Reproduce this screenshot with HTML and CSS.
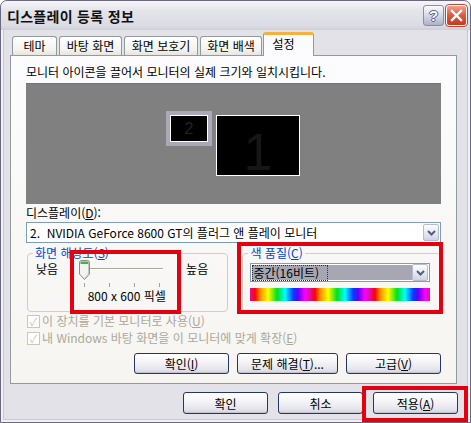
FILE: index.html
```html
<!DOCTYPE html>
<html lang="ko">
<head>
    <meta charset="UTF-8">
    <title>디스플레이 등록 정보</title>
    <link rel="stylesheet" href="styles.css">
</head>
<body>
    <div class="window">
        <div class="titlebar">
            <span class="title">디스플레이 등록 정보</span>
            <span class="tb-btn help">?</span>
            <span class="tb-btn close">
                <svg width="13" height="13" viewBox="0 0 13 13"><path d="M2 2 L11 11 M11 2 L2 11" stroke="#fff" stroke-width="2.4" stroke-linecap="square"/></svg>
            </span>
        </div>

        <div class="tabs">
            <div class="tab t1">테마</div>
            <div class="tab t2">바탕 화면</div>
            <div class="tab t3">화면 보호기</div>
            <div class="tab t4">화면 배색</div>
            <div class="tab active">설정</div>
        </div>

        <div class="panel">
            <div class="caption">모니터 아이콘을 끌어서 모니터의 실제 크기와 일치시킵니다.</div>
            <div class="monitors">
                <div class="monitor second"><span>2</span></div>
                <div class="monitor first"><span>1</span></div>
            </div>

            <div class="label">디스플레이(<u>D</u>):</div>
            <div class="combo">
                <span class="combo-text">2.&nbsp; NVIDIA GeForce 8600 GT의 플러그 앤 플레이 모니터</span>
                <span class="drop"><svg width="9" height="6" viewBox="0 0 9 6"><path d="M1 1 L4.5 4.5 L8 1" fill="none" stroke="#4d6185" stroke-width="2"/></svg></span>
            </div>

            <div class="groups">
                <fieldset class="group resolution">
                    <legend>화면 해상도(<u>S</u>)</legend>
                    <div class="slider-row">
                        <span>낮음</span>
                        <div class="slider">
                            <div class="track"></div>
                            <svg class="thumb" width="11" height="20" viewBox="0 0 11 20">
                                <path d="M0.5 2.5 Q0.5 0.5 2.5 0.5 H8.5 Q10.5 0.5 10.5 2.5 V14 L5.5 19.5 L0.5 14 Z" fill="#f3f3ef" stroke="#8b8b8b"/>
                                <path d="M1.5 2.5 Q1.5 1.5 2.5 1.5 H8.5 Q9.5 1.5 9.5 2.5 V4 H1.5 Z" fill="#3bb540"/>
                                <path d="M9.5 4 V14 L5.5 18.5" fill="none" stroke="#c5c5be"/>
                            </svg>
                            <div class="ticks"><i></i><i></i><i></i><i></i></div>
                        </div>
                        <span>높음</span>
                    </div>
                    <div class="res-value">800 x 600 픽셀</div>
                </fieldset>

                <fieldset class="group quality">
                    <legend>색 품질(<u>C</u>)</legend>
                    <div class="select">
                        <span class="select-text"><span class="focus">중간(16비트)</span></span>
                        <span class="drop"><svg width="9" height="6" viewBox="0 0 9 6"><path d="M1 1 L4.5 4.5 L8 1" fill="none" stroke="#4d6185" stroke-width="2"/></svg></span>
                    </div>
                    <div class="spectrum"></div>
                </fieldset>
            </div>

            <div class="check"><span class="box">✓</span>이 장치를 기본 모니터로 사용(<u>U</u>)</div>
            <div class="check"><span class="box">✓</span>내 Windows 바탕 화면을 이 모니터에 맞게 확장(<u>E</u>)</div>

            <div class="panel-buttons">
                <button class="btn w95">확인(<u>I</u>)</button>
                <button class="btn w100">문제 해결(<u>T</u>)...</button>
                <button class="btn w95">고급(<u>V</u>)</button>
            </div>
        </div>

        <div class="dialog-buttons">
            <button class="btn">확인</button>
            <button class="btn">취소</button>
            <button class="btn">적용(<u>A</u>)</button>
        </div>

        <!-- 강조 표시 -->
        <div class="mark mark-res"></div>
        <div class="mark mark-color"></div>
        <div class="mark mark-apply"></div>
    </div>
</body>
</html>
```

FILE: styles.css
```css
body {
    margin: 0;
    background: #fff;
    font-family: "Noto Sans CJK KR", "Liberation Sans", sans-serif;
    font-size: 12px;
    color: #000;
}
.window {
    position: relative;
    width: 471px;
    height: 423px;
    box-sizing: border-box;
    border: 1px solid #6a697f;
    border-radius: 7px 7px 0 0;
    background: #e3e2e9;
    box-shadow: inset 0 0 0 2px #f1f1f5, inset 0 0 0 3px #c9c8d4;
    display: flex;
    flex-direction: column;
    overflow: hidden;
}
.titlebar {
    height: 29px;
    display: flex;
    align-items: center;
    padding: 0 3px 0 6px;
    background: linear-gradient(#f6f6f9, #e3e3ea 35%, #dcdce4 85%, #cfcfd9);
    border-radius: 6px 6px 0 0;
}
.title {
    flex: 1;
    font-size: 14px;
    font-weight: bold;
    color: #111;
    letter-spacing: 0.3px;
}
.tb-btn {
    width: 21px;
    height: 21px;
    box-sizing: border-box;
    border-radius: 3px;
    margin-left: 2px;
    display: flex;
    align-items: center;
    justify-content: center;
}
.help {
    background: linear-gradient(#fbfbfd, #d2d4e3 55%, #aeb2c9);
    border: 1px solid #8a8ca8;
    color: #fff;
    font-family: "Liberation Sans", sans-serif;
    font-weight: bold;
    font-size: 15px;
    text-shadow: 1px 0 #5b5e7a, -1px 0 #5b5e7a, 0 1px #5b5e7a, 0 -1px #5b5e7a;
}
.close {
    background: linear-gradient(#f0a08c, #e0583c 50%, #c63a20);
    border: 1px solid #fff;
    outline: 1px solid #b44a38;
}
.tabs {
    display: flex;
    align-items: flex-end;
    height: 22px;
    margin-top: 3px;
    padding-left: 11px;
}
.tab {
    height: 19px;
    box-sizing: border-box;
    margin-right: 2px;
    border: 1px solid #919b9c;
    border-bottom: none;
    border-radius: 3px 3px 0 0;
    background: linear-gradient(#ffffff, #f3f3ef 70%, #e6e5de);
    line-height: 17px;
    text-align: center;
    white-space: nowrap;
}
.t1 { width: 45px; }
.t2 { width: 63px; }
.t3 { width: 74px; }
.t4 { width: 62px; }
.tab.active {
    position: relative;
    z-index: 1;
    width: 51px;
    height: 24px;
    margin-bottom: -1px;
    margin-left: -1px;
    padding-right: 10px;
    border-top: 3px solid #f6b041;
    background: #fcfcfe;
    line-height: 17px;
}
.panel {
    margin: 0 13px 0 9px;
    height: 329px;
    box-sizing: border-box;
    border: 1px solid #919b9c;
    background: linear-gradient(#fcfcfe, #f6f5f1);
    padding: 0 15px;
}
.caption {
    margin-top: 8px;
    line-height: 16px;
}
.monitors {
    position: relative;
    margin-top: 3px;
    height: 121px;
    background: #808080;
    border-top: 1px solid #737373;
    box-sizing: border-box;
}
.monitor {
    position: absolute;
    box-sizing: border-box;
    background: #000;
    border: 1px solid #fff;
    display: flex;
    align-items: center;
    justify-content: center;
    color: #161616;
    font-family: "Liberation Sans", sans-serif;
}
.monitor.second {
    left: 144px;
    top: 31px;
    width: 38px;
    height: 27px;
    font-size: 16px;
    color: #222;
    outline: 4px solid #a9a9b7;
}
.monitor.first {
    left: 190px;
    top: 31px;
    width: 84px;
    height: 61px;
    font-size: 52px;
    line-height: 1;
}
.monitor.first span {
    margin-top: 12px;
}
.label {
    margin-top: 1px;
    line-height: 16px;
}
.combo {
    margin-top: 1px;
    height: 21px;
    box-sizing: border-box;
    border: 1px solid #7f9db9;
    background: #fff;
    display: flex;
    align-items: center;
    padding: 1px 1px 1px 3px;
}
.combo-text {
    flex: 1;
    white-space: nowrap;
}
.drop {
    width: 16px;
    height: 17px;
    box-sizing: border-box;
    border: 1px solid #b5bcd0;
    border-radius: 2px;
    background: linear-gradient(#fdfdfe, #e4e6ef 60%, #cfd3e0);
    display: flex;
    align-items: center;
    justify-content: center;
}
.groups {
    display: flex;
    margin-top: 3px;
}
.group {
    margin: 0;
    height: 66px;
    box-sizing: border-box;
    border: 1px solid #d0d0bf;
    border-radius: 4px;
    padding: 0;
}
.group legend {
    margin-left: 5px;
    padding: 0 2px;
    color: #0046d5;
    line-height: 14px;
}
.resolution {
    width: 202px;
    margin-left: 1px;
}
.quality {
    width: 199px;
    margin-left: 14px;
    padding: 0 10px 0 7px;
}
.quality legend {
    margin-left: -2px;
}
.slider-row {
    display: flex;
    align-items: flex-start;
    padding-left: 8px;
    line-height: 16px;
    margin-top: 1px;
}
.slider {
    position: relative;
    width: 90px;
    height: 28px;
    margin: 0 17px 0 21px;
}
.track {
    position: absolute;
    left: 6px;
    right: 6px;
    top: 7px;
    border-top: 1px solid #a9a9a0;
    border-bottom: 1px solid #fff;
}
.thumb {
    position: absolute;
    left: 0;
    top: -1px;
}
.ticks {
    position: absolute;
    left: 5px;
    top: 22px;
    width: 76px;
    display: flex;
    justify-content: space-between;
}
.ticks i {
    width: 1px;
    height: 4px;
    background: #a3a399;
}
.res-value {
    text-align: center;
    line-height: 16px;
    padding-right: 2px;
    margin-top: -1px;
}
.select {
    height: 19px;
    box-sizing: border-box;
    border: 1px solid #7f9db9;
    background: #fff;
    display: flex;
    align-items: center;
    padding: 1px;
    margin-top: 3px;
}
.select-text {
    flex: 1;
    height: 15px;
    background: #a6a6b4;
    display: flex;
    align-items: center;
    padding-left: 1px;
}
.focus {
    outline: 1px dotted #333;
    line-height: 14px;
    padding-right: 8px;
}
.spectrum {
    margin-top: 6px;
    height: 13px;
    background: repeating-linear-gradient(90deg, #e0109a 0, #ff0000 5px, #ff8a00 10px, #ffff00 18px, #00e020 27px, #00ffff 35px, #0040ff 43px, #5a00ff 48px, #ff00ff 55px, #e0109a 60px);
}
.check {
    display: flex;
    align-items: center;
    color: #aca899;
    line-height: 16px;
    margin-top: 1px;
    margin-left: 1px;
}
.check:first-of-type {
    margin-top: 3px;
}
.box {
    width: 13px;
    height: 13px;
    box-sizing: border-box;
    border: 1px solid #cac8bb;
    background: #fff;
    color: #cac8bb;
    font-size: 11px;
    line-height: 11px;
    text-align: center;
    margin-right: 2px;
}
.panel-buttons {
    display: flex;
    justify-content: flex-end;
    gap: 8px;
    margin-top: 7px;
}
.btn {
    height: 21px;
    box-sizing: border-box;
    border: 1px solid #23375f;
    border-radius: 3px;
    background: linear-gradient(#ffffff, #f3f3f6 45%, #e2e2ea 85%, #cfcfdb);
    box-shadow: inset 0 -1px 0 #c4c4d2;
    font-family: inherit;
    font-size: 12px;
    padding: 0;
    color: #000;
}
.w95 {
    width: 95px;
}
.w100 {
    width: 101px;
}
.dialog-buttons {
    display: flex;
    justify-content: flex-end;
    gap: 10px;
    margin: 8px 12px 0 0;
}
.dialog-buttons .btn {
    width: 85px;
    height: 22px;
}
.mark {
    position: absolute;
    border: 4px solid #e3000f;
    box-sizing: border-box;
}
.mark-res {
    left: 69px;
    top: 249px;
    width: 111px;
    height: 64px;
}
.mark-color {
    left: 236px;
    top: 241px;
    width: 206px;
    height: 72px;
}
.mark-apply {
    left: 361px;
    top: 385px;
    width: 106px;
    height: 36px;
}
```
